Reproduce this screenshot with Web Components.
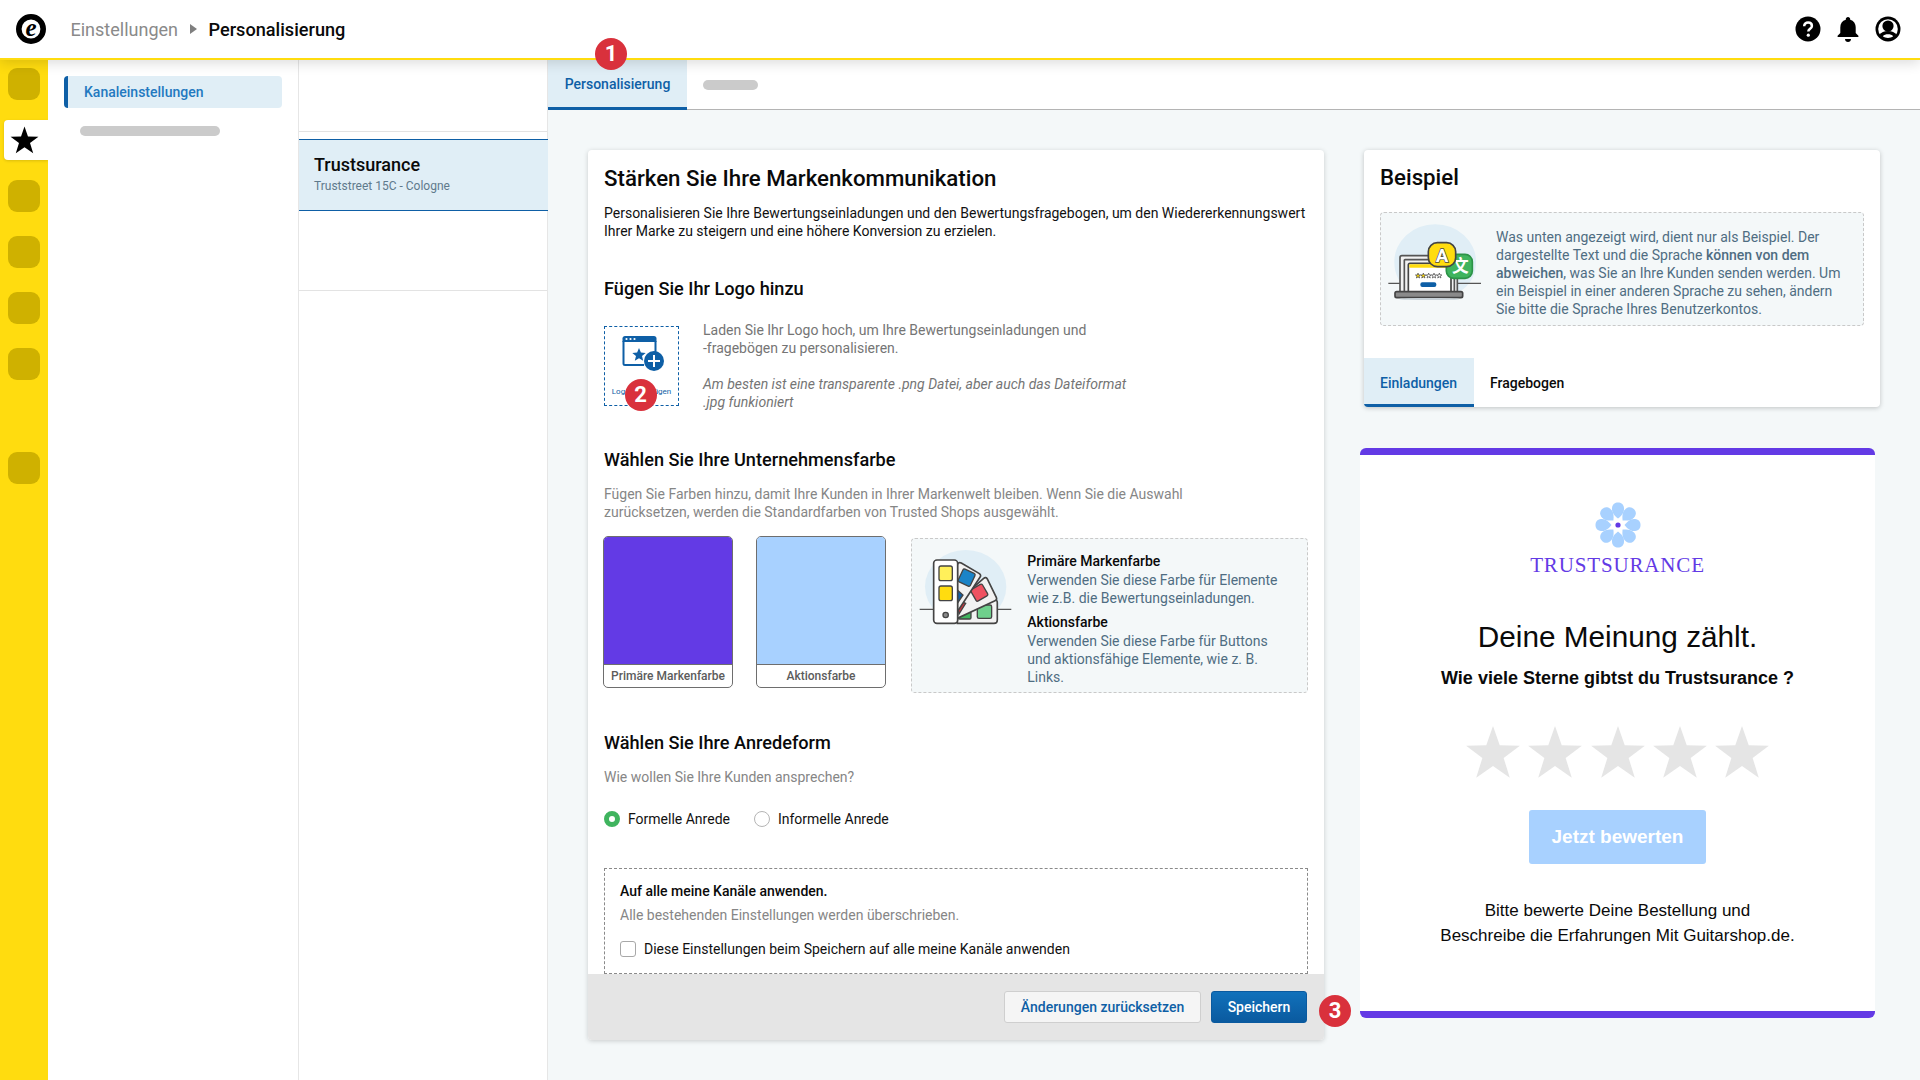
<!DOCTYPE html>
<html lang="de">
<head>
<meta charset="utf-8">
<title>Personalisierung</title>
<style>
html,body{margin:0;padding:0;width:1920px;height:1080px;overflow:hidden;background:#fff;font-family:Roboto,"Liberation Sans",sans-serif;}
</style>
</head>
<body>
<app-shell></app-shell>
<script>
const STAR='M50 2 L62 36 L98 37 L69 59 L80 94 L50 73 L20 94 L31 59 L2 37 L38 36 Z';
function define(name,css,html){
  customElements.define(name,class extends HTMLElement{
    constructor(){super();const r=this.attachShadow({mode:'open'});const t=document.createElement('template');t.innerHTML='<style>'+css+'</style>'+html;r.appendChild(t.content.cloneNode(true));}
  });
}
define('num-badge',`:host{display:flex;position:absolute;z-index:5;width:32px;height:32px;border-radius:50%;background:#d9313c;color:#fff;font:700 22px/32px Roboto,sans-serif;align-items:center;justify-content:center}`,`<slot></slot>`);
define('top-bar',`
:host{display:flex;align-items:center;height:58px;border-bottom:2px solid #ffdc0f;background:#fff;position:relative;z-index:2;box-shadow:0 3px 12px rgba(0,0,0,.14);flex:none}
.logo{margin-left:16px;width:30px;height:30px;flex:none}
.crumb{margin-left:24.500px;font-size:18px;color:#8a8a8a}
.arrow{margin:0 11px 0 12.500px;width:0;height:0;border-left:7px solid #7f7f7f;border-top:5px solid transparent;border-bottom:5px solid transparent}
.cur{font-size:18.150px;font-weight:500;color:#0a0a0a}
.icons{margin-left:auto;display:flex;gap:14px;margin-right:19px}
.icons svg{width:26px;height:26px;display:block}
`,`
<svg class="logo" viewBox="0 0 30 30"><circle cx="15" cy="15" r="12.200" fill="#fff" stroke="#000" stroke-width="5.600"/><text x="15" y="21.500" text-anchor="middle" font-family="Liberation Serif,serif" font-style="italic" font-weight="700" font-size="25" fill="#000">e</text></svg>
<span class="crumb">Einstellungen</span><span class="arrow"></span><span class="cur">Personalisierung</span>
<div class="icons">
<svg viewBox="0 0 26 26"><circle cx="13" cy="13" r="12.5" fill="#000"/><path d="M9.2 10.2c0-2.3 1.7-3.6 3.9-3.6s3.8 1.3 3.8 3.3c0 2.9-3.6 2.9-3.6 5.7" fill="none" stroke="#fff" stroke-width="2.5"/><circle cx="13.3" cy="19.2" r="1.6" fill="#fff"/></svg>
<svg viewBox="0 0 26 26"><path d="M13 1c1.3 0 2.2 1 2.2 2.2v.6c3.6 1 5.5 4 5.5 7.7v5.4l2.7 2.9v1.3H2.6v-1.3l2.7-2.9v-5.4c0-3.7 1.9-6.7 5.500-7.700v-.6C10.800 2 11.700 1 13 1z" fill="#000"/><path d="M10 23h6c0 1.700-1.300 3-3 3s-3-1.300-3-3z" fill="#000"/></svg>
<svg viewBox="0 0 26 26"><circle cx="13" cy="13" r="12.500" fill="#000"/><circle cx="13" cy="13" r="9.800" fill="#fff"/><circle cx="13" cy="10" r="5.600" fill="#000"/><path d="M4.500 19c1.500-2.800 4.700-4 8.500-4s7 1.200 8.500 4c-2 2.700-5 4.200-8.500 4.200S6.500 21.700 4.500 19z" fill="#000"/><path d="M7.800 20.300c1.200-1.400 3-2 5.200-2s4 .6 5.200 2c-1.400 1-3.200 1.600-5.200 1.600s-3.800-.6-5.200-1.600z" fill="#fff"/></svg>
</div>`);
define('side-rail',`
:host{display:block;width:48px;flex:none;background:#ffdc0f;padding-top:8px;box-sizing:border-box}
.i{width:32px;height:32px;margin:0 0 0 8px;border-radius:9px;background:#cfb100}
.a{width:44px;height:40px;margin:20px 0 20px 4px;background:#fff;border-radius:4px 0 0 4px;display:flex;align-items:center;justify-content:center;padding-right:4px;box-sizing:border-box;box-shadow:0 1px 3px rgba(0,0,0,.15)}
.a svg{width:29px;height:29px}
.m{margin-top:24px}.l{margin-top:72px}
`,`<div class="i"></div><div class="a"><svg viewBox="0 0 100 100"><path d="${STAR}" fill="#000"/></svg></div><div class="i"></div><div class="i m"></div><div class="i m"></div><div class="i m"></div><div class="i l"></div>`);
define('nav-panel',`
:host{display:block;width:251px;flex:none;box-sizing:border-box;background:#fff;border-right:1px solid #e6e6e6;padding:16px 15px 0 16px;font-family:Roboto,sans-serif}
.item{height:32px;border-radius:4px;background:#e0eef6;border-left:4px solid #0e5fa6;box-sizing:border-box;padding-left:16px;font-size:14px;font-weight:500;line-height:32px;color:#2379c0;width:218px}
.bar{width:140px;height:10px;border-radius:5px;background:#cbcbcb;margin:18px 0 0 16px}
`,`<div class="item">Kanaleinstellungen</div><div class="bar"></div>`);
define('channel-list',`
:host{display:block;width:249px;flex:none;box-sizing:border-box;background:#fff;border-right:1px solid #e6e6e6;font-family:Roboto,sans-serif;padding-top:71px}
.d{height:1px;background:#e3e3e3}
.sel{margin:7px -1px 0 0;height:72px;box-sizing:border-box;border-top:1px solid #0e5fa6;border-bottom:1px solid #0e5fa6;background:#e0eef6;padding:14px 0 0 15px}
.n{font-size:18px;font-weight:500;color:#0a0a0a;line-height:22px}
.s{font-size:12px;color:#5f7a8c;line-height:16px;margin-top:2px}
.last{margin-top:79px}
`,`<div class="d"></div><div class="sel"><div class="n">Trustsurance</div><div class="s">Truststreet 15C - Cologne</div></div><div class="d last"></div>`);
define('tab-bar',`
:host{display:flex;height:50px;box-sizing:border-box;background:#fff;border-bottom:1px solid #b4b4b4;flex:none;font-family:Roboto,sans-serif}
.t{position:relative;width:139px;height:50px;box-sizing:border-box;background:#e0eef6;border-bottom:3px solid #0e5fa6;text-align:center;font-size:14px;font-weight:500;color:#0e5fa6;line-height:48px}
.p{width:55px;height:10px;border-radius:5px;background:#cbcbcb;margin:20px 0 0 16px}
num-badge{left:47px;top:-22px}
`,`<div class="t">Personalisierung<num-badge>1</num-badge></div><div class="p"></div>`);
define('brand-card',`
:host{display:block;position:relative;width:736px;background:#fff;border-radius:4px;box-shadow:0 1px 5px rgba(0,0,0,.18);font-family:Roboto,sans-serif;color:#111;font-size:14px;line-height:18px}
.body{padding:15px 16px 0}
h1{margin:0;font-size:22.250px;font-weight:500;line-height:26px;color:#0a0a0a}
h2{margin:0;font-size:18.150px;font-weight:500;line-height:22px;color:#0a0a0a}
p{margin:0}
.grey{color:#868686}
.up{display:flex;align-items:center;margin-top:21px}
.upbox{position:relative;width:75px;height:80px;margin:0;box-sizing:border-box;border:1px dashed #0e5fa6;flex:none;text-align:center;color:#0e5fa6;font-size:8px;line-height:12px}
.upbox svg{display:block;width:48px;height:40px;margin:8px 0 0 17px}
.upbox span{display:block;white-space:nowrap;margin-top:11px}
.upbox num-badge{left:19.500px;top:52px}
.updesc{margin-left:24px;color:#757575}
em{font-style:italic}
.sw{display:flex;align-items:flex-start;margin:15px 0 0 -1px}
color-swatch+color-swatch{margin-left:23px}
.info{margin:2px 0 0 25px;width:397px;height:155px;box-sizing:border-box;border:1px dashed #c9c9c9;border-radius:4px;background:#f4f8f9;display:flex;color:#4f6d82}
.info svg{flex:none;width:93.300px;height:75px;margin:11px 0 0 7px}
.info div{margin:13px 0 0 15px}
.info b{display:block;font-weight:500;color:#0a0a0a;margin-bottom:1px}
.info b+span+b{margin-top:6px}
.radios{display:flex;align-items:center;margin-top:24px}
.r{width:16px;height:16px;box-sizing:border-box;border-radius:50%;border:1px solid #b5b5b5;background:#fff;margin-right:8px;flex:none}
.r.on{border:5px solid #3fb45e;background:#fff}
.ri{margin-right:24px}
.box{margin-top:40px;height:106px;box-sizing:border-box;border:1px dashed #8a8a8a;padding:13px 0 0 15px}
.box b{display:block;font-weight:500;color:#0a0a0a}
.box .grey{margin-top:6px}
.chk{display:flex;align-items:center;margin-top:16px}
.c{width:16px;height:16px;box-sizing:border-box;border:1px solid #a8a8a8;border-radius:3px;margin-right:8px;background:#fff}
.foot{height:66px;background:#e5e5e5;display:flex;justify-content:flex-end;align-items:center;padding-right:17px;border-radius:0 0 4px 4px}
.btn{height:32px;box-sizing:border-box;border-radius:3px;font-weight:500;line-height:30px;text-align:center}
.b1{width:197px;background:#f5f5f5;border:1px solid #cfcfcf;color:#0e5fa6}
.b2{width:96px;margin-left:10px;background:linear-gradient(#1171bb,#0a5a9f);border:1px solid #0a5a9f;color:#fff}
.n3{left:731px;top:845px}
`,`
<div class="body">
<h1>Stärken Sie Ihre Markenkommunikation</h1>
<p style="margin-top:13px">Personalisieren Sie Ihre Bewertungseinladungen und den Bewertungsfragebogen, um den Wiedererkennungswert<br>Ihrer Marke zu steigern und eine höhere Konversion zu erzielen.</p>
<h2 style="margin-top:38px">Fügen Sie Ihr Logo hinzu</h2>
<div class="up">
<div class="upbox">
<svg viewBox="0 0 48 40"><path d="M3 2h28c1.500 0 3 1.500 3 3v18h-8l-4 8H3c-1.500 0-3-1.500-3-3V5c0-1.500 1.500-3 3-3z" fill="#fff"/><path d="M3 1h29c1.500 0 2.500 1 2.500 2.500V7H.5V3.500C.5 2 1.500 1 3 1z" fill="#0e5fa6"/><path d="M1.500 6v22.500c0 1 .7 1.500 1.500 1.500h19M33.500 6v14" fill="none" stroke="#0e5fa6" stroke-width="2"/><circle cx="4.500" cy="4" r="1.100" fill="#fff"/><circle cx="8.500" cy="4" r="1.100" fill="#fff"/><circle cx="12.500" cy="4" r="1.100" fill="#fff"/><path d="M17 13l1.900 4.600 4.800.4-3.700 3.100 1.200 4.700-4.200-2.500-4.200 2.500 1.200-4.700-3.700-3.100 4.800-.4z" fill="#0e5fa6"/><circle cx="32" cy="26" r="10" fill="#0e5fa6"/><path d="M32 20v12M26 26h12" stroke="#fff" stroke-width="2"/></svg>
<span>Logo hinzufügen</span>
<num-badge>2</num-badge>
</div>
<div class="updesc">Laden Sie Ihr Logo hoch, um Ihre Bewertungseinladungen und<br>-fragebögen zu personalisieren.<br><br><em>Am besten ist eine transparente .png Datei, aber auch das Dateiformat<br>.jpg funkioniert</em></div>
</div>
<h2 style="margin-top:38px">Wählen Sie Ihre Unternehmensfarbe</h2>
<p class="grey" style="margin-top:14px">Fügen Sie Farben hinzu, damit Ihre Kunden in Ihrer Markenwelt bleiben. Wenn Sie die Auswahl<br>zurücksetzen, werden die Standardfarben von Trusted Shops ausgewählt.</p>
<div class="sw">
<color-swatch style="--c:#633ae5">Primäre Markenfarbe</color-swatch>
<color-swatch style="--c:#a8d1ff">Aktionsfarbe</color-swatch>
<div class="info">
<svg viewBox="10 30 280 225">
<ellipse cx="150" cy="140" rx="122" ry="110" fill="#e0eef6"/>
<path d="M12 208h275" stroke="#555" stroke-width="4"/>
<path d="M125 205L236 180q9-1 9 8v52q0 10-10 10H125z" fill="#f2f2f2" stroke="#444" stroke-width="5"/>
<rect x="185" y="195" width="43" height="40" rx="5" fill="#6fd08c" stroke="#444" stroke-width="4"/>
<rect x="128" y="215" width="38" height="22" rx="4" fill="#3fb45e" stroke="#444" stroke-width="4"/>
<path d="M125 185L204 115q7-5 11 2L242 172q3 7-4 10L125 235z" fill="#f2f2f2" stroke="#444" stroke-width="5"/>
<rect x="171" y="138" width="40" height="40" rx="5" fill="#ef5261" stroke="#444" stroke-width="4" transform="rotate(-30 191 158)"/>
<path d="M125 180L150 190L130 222z" fill="#d9313c" stroke="#444" stroke-width="4"/>
<path d="M125 75q3-10 12-6L190 100q8 5 3 12L125 215z" fill="#f2f2f2" stroke="#444" stroke-width="5"/>
<rect x="133" y="92" width="40" height="42" rx="5" fill="#1b84c8" stroke="#444" stroke-width="4" transform="rotate(25 153 113)"/>
<path d="M125 150L142 165L125 190z" fill="#0e5fa6" stroke="#444" stroke-width="4"/>
<rect x="54" y="60" width="72" height="190" rx="10" fill="#fff" stroke="#444" stroke-width="5"/>
<rect x="70" y="78" width="40" height="44" rx="6" fill="#fff05a" stroke="#444" stroke-width="4"/>
<rect x="70" y="138" width="40" height="44" rx="6" fill="#ffdc0f" stroke="#444" stroke-width="4"/>
<circle cx="90" cy="225" r="8" fill="#8a8a8a" stroke="#444" stroke-width="4"/>
</svg>
<div><b>Primäre Markenfarbe</b><span>Verwenden Sie diese Farbe für Elemente<br>wie z.B. die Bewertungseinladungen.</span><b>Aktionsfarbe</b><span>Verwenden Sie diese Farbe für Buttons<br>und aktionsfähige Elemente, wie z. B.<br>Links.</span></div>
</div>
</div>
<h2 style="margin-top:39px">Wählen Sie Ihre Anredeform</h2>
<p class="grey" style="margin-top:14px">Wie wollen Sie Ihre Kunden ansprechen?</p>
<div class="radios"><span class="r on"></span><span class="ri">Formelle Anrede</span><span class="r"></span><span>Informelle Anrede</span></div>
<div class="box"><b>Auf alle meine Kanäle anwenden.</b><div class="grey">Alle bestehenden Einstellungen werden überschrieben.</div><div class="chk"><span class="c"></span>Diese Einstellungen beim Speichern auf alle meine Kanäle anwenden</div></div>
</div>
<div class="foot"><div class="btn b1">Änderungen zurücksetzen</div><div class="btn b2">Speichern</div></div>
<num-badge class="n3">3</num-badge>
`);
define('color-swatch',`
:host{display:block;width:130px;height:152px;box-sizing:border-box;border:1px solid #6e6e6e;border-radius:5px;overflow:hidden;background:#fff;font:500 12px/23px Roboto,sans-serif;color:#5c5c5c;text-align:center;flex:none}
.f{height:127px;background:var(--c);border-bottom:1px solid #6e6e6e}
`,`<div class="f"></div><slot></slot>`);
define('example-card',`
:host{display:block;width:516px;height:257px;background:#fff;border-radius:4px;box-shadow:0 1px 5px rgba(0,0,0,.22);font-family:Roboto,sans-serif;overflow:hidden}
h1{margin:14px 0 0 16px;font-size:22.250px;font-weight:500;line-height:26px;color:#0a0a0a}
.info{margin:22px 16px 0;height:114px;box-sizing:border-box;border:1px dashed #c9c9c9;border-radius:4px;background:#f4f8f9;display:flex;color:#4f6d82;font-size:14px;line-height:18px}
.info svg{width:115px;height:96px;flex:none;margin-top:2px}
.info div{margin:15px 0 0 0;white-space:nowrap}
.info b{font-weight:500}
.tabs{display:flex;margin-top:32px;height:49px;font-size:14px;font-weight:500;line-height:50px}
.t{width:110px;box-sizing:border-box;background:#e0eef6;border-bottom:3px solid #0e5fa6;color:#0e5fa6;padding-left:16px}
.o{margin-left:16px;color:#0a0a0a}
`,`
<h1>Beispiel</h1>
<div class="info">
<svg viewBox="0 0 345 288">
<path d="M40 140a122 112 0 1 1 245 0q0 60-50 90H90Q40 200 40 140z" fill="#e0eef6"/>
<path d="M22 205h278" stroke="#555" stroke-width="4"/>
<path d="M57 230V128q0-6 6-6h160q6 0 6 6v102" fill="#f2f2f2" stroke="#555" stroke-width="5"/>
<path d="M70 230V136q0-2 2-2h146q2 0 2 2v94" fill="#f2f2f2" stroke="#555" stroke-width="5"/>
<rect x="82" y="145" width="128" height="88" rx="5" fill="#fff" stroke="#444" stroke-width="5"/>
<path d="M85 148h122v10H85z" fill="#ffdc0f"/>
<g fill="#ffdc0f" stroke="#444" stroke-width="13">
<path transform="translate(103 174) scale(.16)" d="${STAR}"/><path transform="translate(119 174) scale(.16)" d="${STAR}"/>
</g>
<g fill="#fff" stroke="#444" stroke-width="13"><path transform="translate(135 174) scale(.16)" d="${STAR}"/><path transform="translate(151 174) scale(.16)" d="${STAR}"/><path transform="translate(167 174) scale(.16)" d="${STAR}"/></g>
<rect x="118" y="202" width="48" height="14" rx="6" fill="#0e5fa6"/>
<rect x="42" y="230" width="203" height="18" rx="5" fill="#8a8a8a" stroke="#444" stroke-width="5"/>
<ellipse cx="145" cy="252" rx="90" ry="3" fill="#c8d2d8"/>
<rect x="196" y="118" width="78" height="72" rx="22" fill="#3fb45e" stroke="#2d9348" stroke-width="5"/>
<text x="238" y="172" text-anchor="middle" font-family="Noto Sans CJK SC,sans-serif" font-size="50" font-weight="700" fill="#fff">文</text>
<rect x="142" y="83" width="82" height="72" rx="27" fill="#ffdc0f" stroke="#444" stroke-width="5"/>
<text x="183" y="140" text-anchor="middle" font-family="Roboto,sans-serif" font-size="56" font-weight="700" fill="#fff" stroke="#444" stroke-width="4" paint-order="stroke">A</text>
</svg>
<div>Was unten angezeigt wird, dient nur als Beispiel. Der<br>dargestellte Text und die Sprache <b>können von dem<br>abweichen</b>, was Sie an Ihre Kunden senden werden. Um<br>ein Beispiel in einer anderen Sprache zu sehen, ändern<br>Sie bitte die Sprache Ihres Benutzerkontos.</div>
</div>
<div class="tabs"><div class="t">Einladungen</div><div class="o">Fragebogen</div></div>`);
define('email-preview',`
:host{display:block;width:515px;height:570px;margin:41px 0 0 -4px;box-sizing:border-box;background:#fff;border-top:7px solid #633ae5;border-bottom:7px solid #633ae5;border-radius:6px;text-align:center;font-family:"Liberation Sans",Arial,sans-serif;color:#0a0a0a}
.fl{display:block;margin:47px auto 0;width:46px;height:46px;position:relative;left:.5px}
.brand{margin-top:4px;font-family:"Liberation Serif",serif;font-size:21px;line-height:26px;letter-spacing:.85px;color:#633ae5}
.h{margin-top:41px;font-size:29.750px;line-height:36px}
.q{margin-top:12px;font-size:18px;font-weight:700;line-height:22px}
.st{display:flex;justify-content:center;gap:6.400px;margin-top:36px}
.st svg{width:56px;height:56px;display:block}
.b{width:177px;height:54px;margin:29px auto 0;background:#a8d1ff;border-radius:3px;color:#fff;font-size:19px;font-weight:700;line-height:54px}
.t{margin-top:34px;font-size:17px;line-height:25px}
`,`
<svg class="fl" viewBox="-23 -23 46 46">
${[0,45,90,135,180,225,270,315].map(a=>`<path transform="rotate(${a})" d="M0 -6.500C-3 -9 -6.500 -12 -6 -17C-5.500 -21 -3 -22.500 0 -22.500C3 -22.500 5.500 -21 6 -17C6.500 -12 3 -9 0 -6.500Z" fill="#a8d1ff"/>`).join('')}
<circle r="2.600" fill="#633ae5"/></svg>
<div class="brand">TRUSTSURANCE</div>
<div class="h">Deine Meinung zählt.</div>
<div class="q">Wie viele Sterne gibtst du Trustsurance ?</div>
<div class="st">${Array(5).fill(`<svg viewBox="0 0 100 100"><path d="${STAR}" fill="#e5e5e5"/></svg>`).join('')}</div>
<div class="b">Jetzt bewerten</div>
<div class="t">Bitte bewerte Deine Bestellung und<br>Beschreibe die Erfahrungen Mit Guitarshop.de.</div>`);
define('app-shell',`
:host{display:flex;flex-direction:column;width:1920px;height:1080px;font-family:Roboto,sans-serif}
.body{flex:1;display:flex;min-height:0}
.main{flex:1;display:flex;flex-direction:column;background:#f4f8f9;min-width:0}
.content{display:flex;padding:40px 0 0 40px;gap:40px;align-items:flex-start}
.right{display:flex;flex-direction:column}
`,`
<top-bar></top-bar>
<div class="body">
<side-rail></side-rail><nav-panel></nav-panel><channel-list></channel-list>
<div class="main"><tab-bar></tab-bar>
<div class="content"><brand-card></brand-card><div class="right"><example-card></example-card><email-preview></email-preview></div></div>
</div></div>`);
</script>
</body>
</html>
